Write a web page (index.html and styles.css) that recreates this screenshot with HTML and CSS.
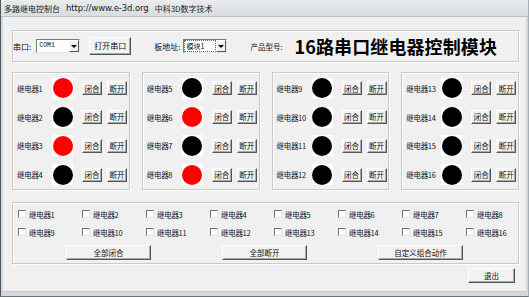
FILE: index.html
```
<!DOCTYPE html>
<html lang="zh">
<head>
<meta charset="utf-8">
<link rel="stylesheet" href="styles.css">
</head>
<body>
<div class="window">
  <div class="titlebar">
    <span>多路继电控制台</span><span class="url">http://www.e-3d.org</span><span>中科3D数字技术</span>
  </div>
  <div class="client">
    <div class="group topbar">
      <span class="lbl">串口:</span>
      <div class="combo c1"><span class="val">COM1</span><span class="drop"><i></i></span></div>
      <button class="btn open">打开串口</button>
      <span class="lbl addr">板地址:</span>
      <div class="combo c2"><span class="val">模块1</span><span class="drop"><i></i></span></div>
      <span class="lbl model">产品型号:</span>
      <span class="product">16路串口继电器控制模块</span>
    </div>

    <div class="relays">
      <div class="group rbox">
        <div class="row"><span class="name">继电器1</span><span class="lamp"><i class="on"></i></span><button class="btn sm">闭合</button><button class="btn sm">断开</button></div>
        <div class="row"><span class="name">继电器2</span><span class="lamp"><i></i></span><button class="btn sm">闭合</button><button class="btn sm">断开</button></div>
        <div class="row"><span class="name">继电器3</span><span class="lamp"><i class="on"></i></span><button class="btn sm">闭合</button><button class="btn sm">断开</button></div>
        <div class="row"><span class="name">继电器4</span><span class="lamp"><i></i></span><button class="btn sm">闭合</button><button class="btn sm">断开</button></div>
      </div>
      <div class="group rbox">
        <div class="row"><span class="name">继电器5</span><span class="lamp"><i></i></span><button class="btn sm">闭合</button><button class="btn sm">断开</button></div>
        <div class="row"><span class="name">继电器6</span><span class="lamp"><i class="on"></i></span><button class="btn sm">闭合</button><button class="btn sm">断开</button></div>
        <div class="row"><span class="name">继电器7</span><span class="lamp"><i></i></span><button class="btn sm">闭合</button><button class="btn sm">断开</button></div>
        <div class="row"><span class="name">继电器8</span><span class="lamp"><i class="on"></i></span><button class="btn sm">闭合</button><button class="btn sm">断开</button></div>
      </div>
      <div class="group rbox">
        <div class="row"><span class="name">继电器9</span><span class="lamp"><i></i></span><button class="btn sm">闭合</button><button class="btn sm">断开</button></div>
        <div class="row"><span class="name">继电器10</span><span class="lamp"><i></i></span><button class="btn sm">闭合</button><button class="btn sm">断开</button></div>
        <div class="row"><span class="name">继电器11</span><span class="lamp"><i></i></span><button class="btn sm">闭合</button><button class="btn sm">断开</button></div>
        <div class="row"><span class="name">继电器12</span><span class="lamp"><i></i></span><button class="btn sm">闭合</button><button class="btn sm">断开</button></div>
      </div>
      <div class="group rbox">
        <div class="row"><span class="name">继电器13</span><span class="lamp"><i></i></span><button class="btn sm">闭合</button><button class="btn sm">断开</button></div>
        <div class="row"><span class="name">继电器14</span><span class="lamp"><i></i></span><button class="btn sm">闭合</button><button class="btn sm">断开</button></div>
        <div class="row"><span class="name">继电器15</span><span class="lamp"><i></i></span><button class="btn sm">闭合</button><button class="btn sm">断开</button></div>
        <div class="row"><span class="name">继电器16</span><span class="lamp"><i></i></span><button class="btn sm">闭合</button><button class="btn sm">断开</button></div>
      </div>
    </div>

    <div class="group combos">
      <div class="checks">
        <label class="chk"><span class="box"></span>继电器1</label>
        <label class="chk"><span class="box"></span>继电器2</label>
        <label class="chk"><span class="box"></span>继电器3</label>
        <label class="chk"><span class="box"></span>继电器4</label>
        <label class="chk"><span class="box"></span>继电器5</label>
        <label class="chk"><span class="box"></span>继电器6</label>
        <label class="chk"><span class="box"></span>继电器7</label>
        <label class="chk"><span class="box"></span>继电器8</label>
        <label class="chk"><span class="box"></span>继电器9</label>
        <label class="chk"><span class="box"></span>继电器10</label>
        <label class="chk"><span class="box"></span>继电器11</label>
        <label class="chk"><span class="box"></span>继电器12</label>
        <label class="chk"><span class="box"></span>继电器13</label>
        <label class="chk"><span class="box"></span>继电器14</label>
        <label class="chk"><span class="box"></span>继电器15</label>
        <label class="chk"><span class="box"></span>继电器16</label>
      </div>
      <div class="actions">
        <button class="btn wide">全部闭合</button>
        <button class="btn wide">全部断开</button>
        <button class="btn wide">自定义组合动作</button>
      </div>
    </div>

    <div class="footer">
      <button class="btn exit">退出</button>
    </div>
  </div>
</div>
</body>
</html>
```

FILE: styles.css
```
* { box-sizing: border-box; }
html, body { margin: 0; padding: 0; }
body {
  width: 529px;
  height: 297px;
  overflow: hidden;
  background: #f0f0f0;
  font-family: "Noto Sans CJK SC", "Liberation Sans", sans-serif;
  color: #111;
}
.window {
  width: 529px;
  height: 297px;
  display: flex;
  flex-direction: column;
  border-left: 1px solid #4e5a63;
  border-right: 1px solid #a6adb3;
  border-bottom: 1px solid #6b747b;
  background: #d3d8dc;
}
.titlebar {
  height: 17px;
  flex: none;
  display: flex;
  align-items: center;
  gap: 6px;
  padding-left: 3px;
  font-size: 8px;
  color: #1c1c1c;
  background: linear-gradient(#e9ebed, #d9dde0);
  border-bottom: 1px solid #b9c0c6;
}
.titlebar .url {
  font-family: "DejaVu Sans", sans-serif;
  font-size: 8.5px;
  letter-spacing: -0.1px;
}
.client {
  flex: 1;
  margin: 0 2px 4px 2px;
  background: #f0f0f0;
  padding: 13px 7px 0 9px;
  border-bottom: 1px solid #c6ccd1;
}
.group {
  border: 1px solid #c9c9c9;
  box-shadow: inset 1px 1px 0 #fff, 1px 1px 0 #fff;
}
.topbar {
  height: 32px;
  width: 507px;
  display: flex;
  align-items: center;
  font-size: 8px;
}
.lbl { white-space: nowrap; }
.combo {
  width: 44px;
  height: 14px;
  background: #fff;
  border: 1px solid;
  border-color: #7a7a7a #e8e8e8 #e8e8e8 #7a7a7a;
  display: flex;
  align-items: stretch;
  margin-left: 5px;
  font-size: 7px;
}
.combo .val {
  flex: 1;
  padding-left: 2px;
  line-height: 12px;
  white-space: nowrap;
  font-family: "Noto Sans CJK SC", "DejaVu Sans", sans-serif;
}
.c1 .val { font-family: "Liberation Mono", monospace; font-size: 6.5px; }
.c2 .val { background: #fff; outline: 1px dotted #666; outline-offset: -1px; }
.drop {
  width: 10px;
  background: #f0f0f0;
  border: 1px solid;
  border-color: #fff #555 #555 #fff;
  display: flex;
  align-items: center;
  justify-content: center;
}
.drop i {
  width: 0; height: 0;
  border-left: 3px solid transparent;
  border-right: 3px solid transparent;
  border-top: 3px solid #000;
}
.btn {
  font-family: "Noto Sans CJK SC", sans-serif;
  font-size: 7.5px;
  color: #111;
  background: #f2f2f2;
  border: 1px solid;
  border-color: #fff #555 #555 #fff;
  box-shadow: inset -1px -1px 0 #a8a8a8;
  padding: 0;
  margin: 0;
  line-height: 1;
  display: flex;
  align-items: center;
  justify-content: center;
}
.open {
  width: 42px;
  height: 18px;
  margin-left: 9px;
  font-size: 8px;
}
.addr { margin-left: 23px; }
.c2 { margin-left: 3px; }
.model { margin-left: 23px; font-size: 7.5px; }
.product {
  margin-left: 12px;
  font-size: 18px;
  font-weight: bold;
  letter-spacing: 0.1px;
  color: #000;
  white-space: nowrap;
}

.relays {
  margin-top: 10px;
  display: flex;
  gap: 12px;
}
.rbox {
  width: 118px;
  height: 118px;
  padding-top: 1px;
  display: flex;
  flex-direction: column;
}
.row {
  height: 29px;
  display: flex;
  align-items: center;
  padding-left: 4px;
}
.name {
  width: 35px;
  font-size: 7.5px;
  white-space: nowrap;
  letter-spacing: -0.3px;
}
.lamp {
  width: 21px;
  height: 21px;
  background: #fff;
  display: flex;
  align-items: center;
  justify-content: center;
}
.lamp i {
  width: 20px;
  height: 20px;
  border-radius: 50%;
  background: #000;
}
.lamp i.on { background: #ff0000; }
.btn.sm {
  width: 20px;
  height: 14px;
  margin-left: 9px;
}
.btn.sm + .btn.sm { margin-left: 5px; }

.combos {
  margin-top: 12px;
  width: 507px;
  height: 62px;
  padding: 6px 0 0 5px;
}
.checks {
  display: grid;
  grid-template-columns: repeat(8, 64px);
  grid-auto-rows: 10px;
  row-gap: 8px;
}
.chk {
  display: flex;
  align-items: center;
  font-size: 7.5px;
  white-space: nowrap;
  letter-spacing: -0.3px;
}
.chk .box {
  width: 8px;
  height: 8px;
  background: #fff;
  border: 1px solid;
  border-color: #6f6f6f #e4e4e4 #e4e4e4 #6f6f6f;
  margin-right: 3px;
}
.actions {
  margin-top: 8px;
  display: flex;
  padding-left: 48px;
  gap: 71px;
}
.btn.wide {
  width: 85px;
  height: 15px;
}
.footer {
  display: flex;
  justify-content: flex-end;
  width: 507px;
  padding-right: 4px;
  margin-top: 4px;
}
.btn.exit {
  width: 47px;
  height: 15px;
}
```
